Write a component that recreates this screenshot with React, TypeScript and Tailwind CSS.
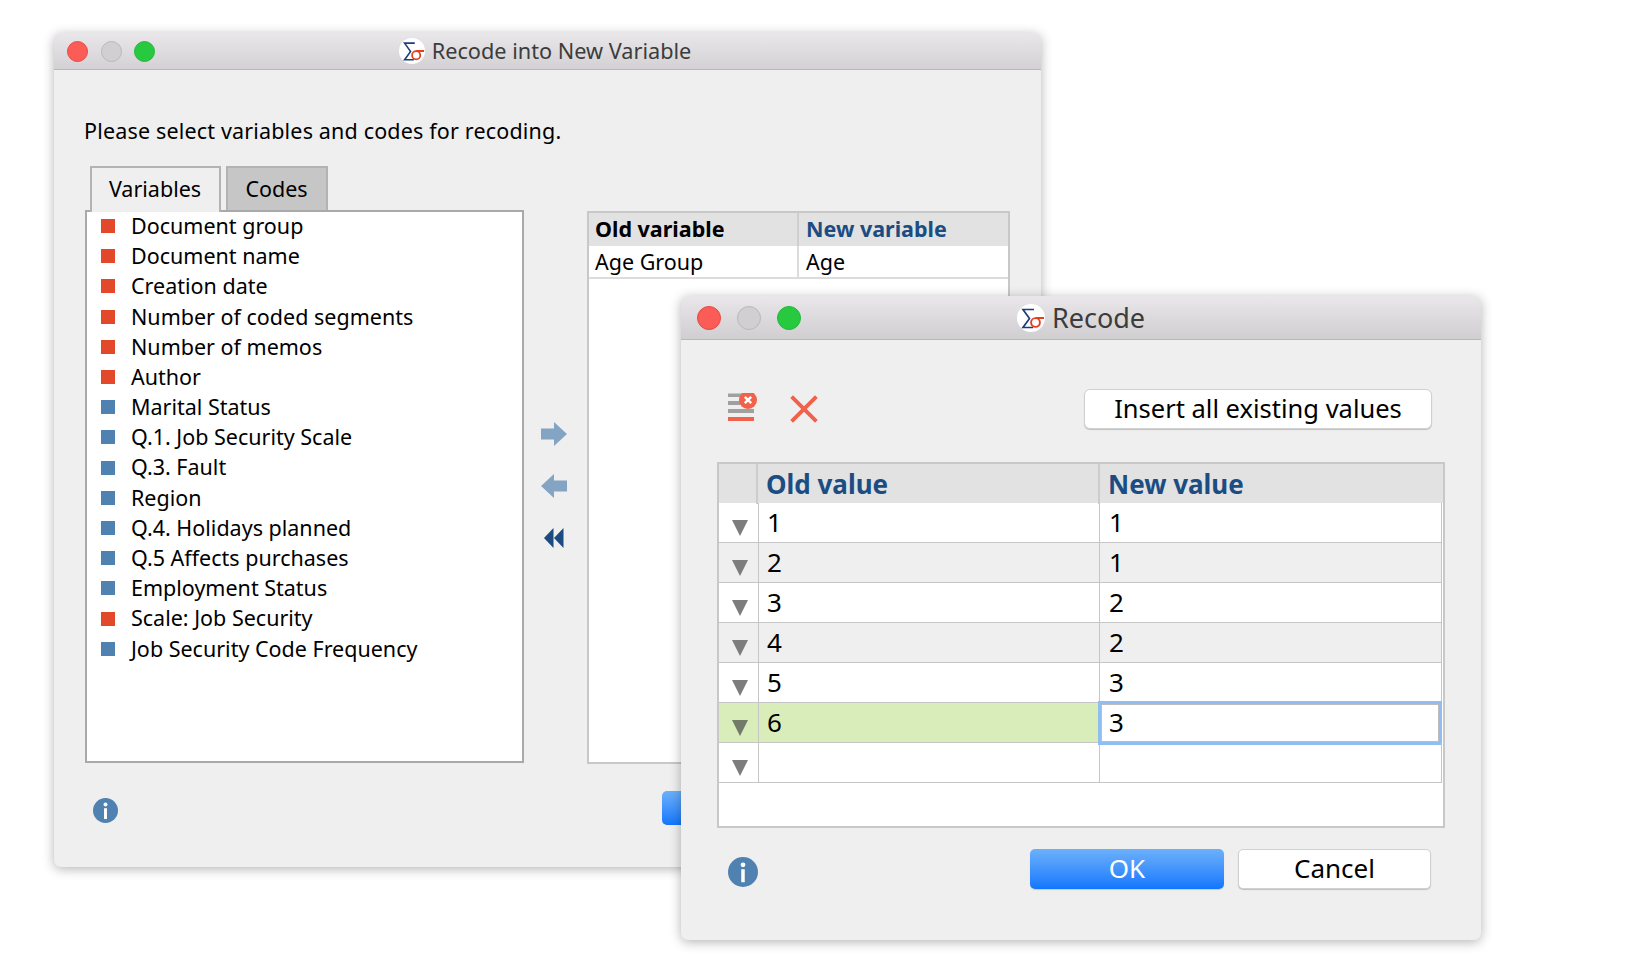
import React from "react";

const listItems: { label: string; red: boolean }[] = [
  { label: "Document group", red: true },
  { label: "Document name", red: true },
  { label: "Creation date", red: true },
  { label: "Number of coded segments", red: true },
  { label: "Number of memos", red: true },
  { label: "Author", red: true },
  { label: "Marital Status", red: false },
  { label: "Q.1. Job Security Scale", red: false },
  { label: "Q.3. Fault", red: false },
  { label: "Region", red: false },
  { label: "Q.4. Holidays planned", red: false },
  { label: "Q.5 Affects purchases", red: false },
  { label: "Employment Status", red: false },
  { label: "Scale: Job Security", red: true },
  { label: "Job Security Code Frequency", red: false },
];

const valueRows = [
  { oldValue: "1", newValue: "1" },
  { oldValue: "2", newValue: "1" },
  { oldValue: "3", newValue: "2" },
  { oldValue: "4", newValue: "2" },
  { oldValue: "5", newValue: "3" },
  { oldValue: "6", newValue: "3" },
  { oldValue: "", newValue: "" },
];

function Logo({ size }: { size: string }) {
  return (
    <svg viewBox="0 0 28 28" className={size}>
      <circle cx="14" cy="14" r="14" fill="#fff" />
      <path d="M17 5.5H6L12.5 14.5L6 23.5H16" fill="none" stroke="#1b3f7e" strokeWidth="1.7" />
      <circle cx="18.5" cy="18.5" r="4.4" fill="none" stroke="#e2401f" strokeWidth="1.9" />
      <path d="M18.5 14H27" fill="none" stroke="#e2401f" strokeWidth="1.9" />
    </svg>
  );
}

function InfoIcon({ size }: { size: string }) {
  return (
    <svg viewBox="0 0 24 24" className={size}>
      <circle cx="12" cy="12" r="12" fill="#4f81b1" />
      <circle cx="12" cy="6.2" r="1.9" fill="#fff" />
      <rect x="10.6" y="9.8" width="2.8" height="10.4" fill="#fff" />
    </svg>
  );
}

function Triangle({ selected }: { selected: boolean }) {
  return (
    <svg viewBox="0 0 16 16" className="h-[16px] w-[16px]">
      <path d="M0 0H16L8 16Z" fill={selected ? "#737a68" : "#7d7d7d"} />
    </svg>
  );
}

function Lights({ dot, gap }: { dot: string; gap: string }) {
  return (
    <div className={`flex items-center ${gap}`}>
      <span className={`${dot} rounded-full border border-[#e5483f] bg-[#fc5c57]`} />
      <span className={`${dot} rounded-full border border-[#b9b9b9] bg-[#d0d0d0]`} />
      <span className={`${dot} rounded-full border border-[#22b83c] bg-[#27c93f]`} />
    </div>
  );
}

function VariableWindow() {
  return (
    <div className="absolute left-[54px] top-[33px] h-[834px] w-[987px] overflow-hidden rounded-[7px] bg-[#efefef] shadow-[0_2px_12px_rgba(0,0,0,0.3)]">
      <div className="grid h-[37px] grid-cols-[1fr_auto_1fr] items-center border-b border-[#b9b7b9] bg-gradient-to-b from-[#e9e7e9] to-[#d3d1d3] pl-[13px] pr-[18px]">
        <Lights dot="h-[21px] w-[21px]" gap="gap-[12.5px]" />
        <div className="flex items-center gap-[7px] text-[21.7px] text-[#3c3c3c]">
          <Logo size="h-[26px] w-[26px]" />
          <span className="pt-[1px]">Recode into New Variable</span>
        </div>
        <div />
      </div>

      <div className="px-[31px] pt-[46px]">
        <p className="-ml-[1px] h-[30px] text-[21.5px] leading-[30px] tracking-[0.17px] text-black">Please select variables and codes for recoding.</p>

        <div className="mt-[20px] flex">
          <div className="w-[439px]">
            <div className="relative z-10 -mb-[2px] ml-[4.5px] flex h-[46px] gap-[5px] text-[21.5px] text-black">
              <div className="flex w-[131px] items-center justify-center border-2 border-b-0 border-[#b3b3b3] bg-[#efefef] pb-[2px]">Variables</div>
              <div className="mb-[2px] flex w-[102px] items-center justify-center border-2 border-b-0 border-[#b3b3b3] bg-[#c6c6c6]">Codes</div>
            </div>
            <div className="h-[553px] border-2 border-[#a9a9a9] bg-white">
              <ul className="-mt-[1px] pl-[14px]">
                {listItems.map((item) => (
                  <li key={item.label} className="flex h-[30.2px] items-center gap-[16px] text-[21.5px] text-black">
                    <span className={`h-[14px] w-[14px] ${item.red ? "bg-[#e2492a]" : "bg-[#4f81b1]"}`} />
                    {item.label}
                  </li>
                ))}
              </ul>
            </div>
          </div>

          <div className="flex w-[63px] flex-col items-center pr-[4px] pt-[256px]">
            <svg viewBox="0 0 26 24" className="h-[24px] w-[26px]">
              <path d="M0 6.5H13V0L26 12L13 24V17.5H0Z" fill="#83a4c2" />
            </svg>
            <svg viewBox="0 0 26 24" className="mt-[28px] h-[24px] w-[26px]">
              <path d="M26 6.5H13V0L0 12L13 24V17.5H26Z" fill="#83a4c2" />
            </svg>
            <svg viewBox="0 0 20 20" className="mt-[30px] h-[20px] w-[20px]">
              <path d="M0 10L9.5 0V20ZM10 10L19.5 0V20Z" fill="#1b4b80" />
            </svg>
          </div>

          <div className="mt-[45px] h-[553px] w-[423px] border-2 border-[#c8c8c8] bg-white text-[21.5px]">
            <div className="grid h-[33px] grid-cols-[210px_1fr] bg-[#e2e2e2] text-[21.5px] font-bold leading-[32px]">
              <div className="border-r-2 border-[#cfcfcf] pl-[6px] text-black">Old variable</div>
              <div className="pl-[7px] text-[#1b4d82]">New variable</div>
            </div>
            <div className="grid h-[33px] grid-cols-[210px_1fr] border-b-2 border-[#dcdcdc] leading-[31px] text-black">
              <div className="border-r-2 border-[#dcdcdc] pl-[6px]">Age Group</div>
              <div className="pl-[7px]">Age</div>
            </div>
          </div>
        </div>

        <div className="mt-[34px] flex h-[34px] items-start pl-[8px]">
          <InfoIcon size="h-[25px] w-[25px]" />
          <div className="ml-[544px] mt-[-7px] h-[34px] w-[60px] rounded-[5px] bg-gradient-to-b from-[#6bb0fb] to-[#0e76fd]" />
        </div>
      </div>
    </div>
  );
}

function RecodeWindow() {
  return (
    <div className="absolute left-[681px] top-[296px] h-[644px] w-[800px] overflow-hidden rounded-[7px] bg-[#efefef] shadow-[0_2px_12px_rgba(0,0,0,0.3)]">
      <div className="grid h-[44px] grid-cols-[1fr_auto_1fr] items-center border-b border-[#b9b7b9] bg-gradient-to-b from-[#e9e7e9] to-[#d0ced0] pl-[16px] pr-[16px]">
        <Lights dot="h-[24px] w-[24px]" gap="gap-[16px]" />
        <div className="flex items-center gap-[7px] text-[27px] text-[#3c3c3c]">
          <Logo size="h-[28px] w-[28px]" />
          <span className="pt-[2px]">Recode</span>
        </div>
        <div />
      </div>

      <div className="px-[37px] pt-[49px]">
        <div className="flex h-[40px] items-center pl-[10px] pr-[13px]">
          <svg viewBox="0 0 30 30" className="-mt-[2px] h-[30px] w-[30px]">
            <rect x="0" y="0.5" width="26" height="3.5" fill="#a0a0a0" />
            <rect x="0" y="8" width="26" height="4" fill="#a0a0a0" />
            <rect x="0" y="16" width="26" height="4" fill="#a0a0a0" />
            <rect x="0" y="24" width="26" height="4" fill="#f0634a" />
            <circle cx="20" cy="7" r="9" fill="#f0634a" />
            <path d="M16.8 3.8L23.2 10.2M23.2 3.8L16.8 10.2" stroke="#fff" strokeWidth="2.4" />
          </svg>
          <svg viewBox="0 0 26 26" className="-mt-[1px] ml-[32px] h-[28px] w-[28px]">
            <path d="M1.5 1.5L24.5 24.5M24.5 1.5L1.5 24.5" stroke="#f0634a" strokeWidth="3.6" />
          </svg>
          <button className="ml-auto flex h-[40px] w-[348px] translate-x-[1px] items-center justify-center rounded-[6px] border border-[#d0d0d0] bg-white pb-[2px] text-[25.5px] text-black shadow-[0_1px_1px_rgba(0,0,0,0.2)]">
            Insert all existing values
          </button>
        </div>

        <div className="-ml-[1px] mt-[33px] h-[366px] w-[728px] border-2 border-[#c8c8c8] bg-white">
          <div className="grid h-[39px] grid-cols-[39px_342px_1fr] bg-[#e2e2e2] text-[26px] font-bold leading-[40px] text-[#1b4d82]">
            <div className="border-r-2 border-[#cdcdcd]" />
            <div className="border-r-2 border-[#cdcdcd] pl-[8px]">Old value</div>
            <div className="pl-[8px]">New value</div>
          </div>
          {valueRows.map((row, i) => {
            const selected = i === 5;
            return (
              <div
                key={i}
                className={`mr-[1px] grid h-[40px] grid-cols-[39px_342px_1fr] border-b border-[#c6c6c6] text-[26px] leading-[39px] text-black ${i % 2 === 1 ? "bg-[#efefef]" : "bg-white"}`}
              >
                <div className={`flex items-end justify-center pb-[6px] pl-[2px] ${selected ? "bg-[#d8edb9]" : ""}`}>
                  <Triangle selected={selected} />
                </div>
                <div className={`border-l border-r border-[#c6c6c6] pl-[8px] ${selected ? "bg-[#d8edb9]" : ""}`}>{row.oldValue}</div>
                <div className="relative border-r border-[#c6c6c6] pl-[9px]">
                  {selected ? (
                    <div className="absolute -bottom-[3px] -left-[2px] -right-[1px] -top-[2px] border-[3px] border-[#90bdf2] bg-white pl-[8px] leading-[37px] shadow-[inset_0_0_0_1px_#bdbdbd]">
                      {row.newValue}
                    </div>
                  ) : (
                    row.newValue
                  )}
                </div>
              </div>
            );
          })}
        </div>

        <div className="mt-[21px] flex items-start pl-[10px] pr-[14px]">
          <div className="pt-[8px]">
            <InfoIcon size="h-[30px] w-[30px]" />
          </div>
          <button className="ml-auto flex h-[40px] w-[194px] translate-x-[1px] items-center justify-center rounded-[5px] bg-gradient-to-b from-[#6bb0fb] to-[#0e76fd] pb-[2px] text-[26px] text-white shadow-[0_1px_1px_rgba(0,0,0,0.15)]">
            OK
          </button>
          <button className="ml-[14px] flex h-[40px] w-[193px] translate-x-[1px] items-center justify-center rounded-[5px] border border-[#d0d0d0] bg-white pb-[2px] text-[26px] text-black shadow-[0_1px_1px_rgba(0,0,0,0.2)]">
            Cancel
          </button>
        </div>
      </div>
    </div>
  );
}

export default function App() {
  return (
    <div className="relative h-[962px] w-[1630px] overflow-hidden bg-white font-['Noto_Sans','Liberation_Sans',sans-serif]">
      <VariableWindow />
      <RecodeWindow />
    </div>
  );
}
